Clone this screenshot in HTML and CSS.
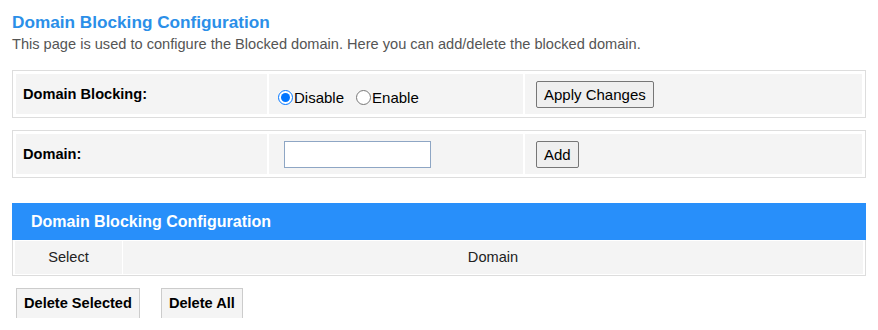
FILE: index.html
```html
<!DOCTYPE html>
<html lang="en">
<head>
    <meta charset="UTF-8">
    <meta name="viewport" content="width=device-width, initial-scale=1.0">
    <title>Domain Blocking Configuration</title>
    <link rel="stylesheet" href="styles.css">
</head>
<body>

<h1 class="page-title">Domain Blocking Configuration</h1>
<p class="page-desc">This page is used to configure the Blocked domain. Here you can add/delete the blocked domain.</p>

<form class="settings-box">
    <div class="cell cell-label">Domain Blocking:</div>
    <div class="cell cell-radios">
        <label class="radio"><input type="radio" name="blocking" checked>Disable</label>
        <label class="radio"><input type="radio" name="blocking">Enable</label>
    </div>
    <div class="cell cell-action">
        <button type="button" class="plain-btn">Apply Changes</button>
    </div>
</form>

<form class="settings-box second">
    <div class="cell cell-label">Domain:</div>
    <div class="cell cell-input">
        <input type="text" class="domain-input">
    </div>
    <div class="cell cell-action">
        <button type="button" class="plain-btn">Add</button>
    </div>
</form>

<div class="list-title">Domain Blocking Configuration</div>
<div class="list-box">
    <div class="list-head">Select</div>
    <div class="list-head">Domain</div>
</div>

<div class="actions">
    <button type="button" class="delete-btn">Delete Selected</button>
    <button type="button" class="delete-btn">Delete All</button>
</div>

</body>
</html>
```

FILE: styles.css
```css
body {
    font-family: 'Liberation Sans', Arial, sans-serif;
    background-color: #fff;
    color: #000;
    margin: 0;
    padding: 12px;
}

.page-title {
    margin: 0;
    font-size: 17.2px;
    line-height: 20px;
    font-weight: bold;
    color: #2b8fe8;
}

.page-desc {
    margin: 4px 0 0;
    font-size: 14.6px;
    line-height: 17px;
    color: #555;
}

.settings-box {
    display: grid;
    grid-template-columns: 251px 254px 1fr;
    gap: 2px;
    margin: 17px 0 0;
    padding: 3px;
    border: 1px solid #ddd;
}

.settings-box.second {
    margin-top: 12px;
}

.cell {
    display: flex;
    align-items: center;
    height: 40px;
    background-color: #f4f4f4;
    font-size: 14.6px;
}

.cell-label {
    padding-left: 7px;
    font-weight: bold;
}

.cell-radios {
    padding-left: 4px;
    padding-top: 6px;
    box-sizing: border-box;
    font-size: 15px;
}

.radio {
    display: flex;
    align-items: center;
    margin-right: 7px;
}

.radio input {
    width: 15px;
    height: 15px;
    margin: 0 1px 0 5px;
}

.cell-input {
    padding-left: 15px;
}

.domain-input {
    width: 147px;
    height: 27px;
    box-sizing: border-box;
    border: 1px solid #8ea6c4;
    border-radius: 0;
    padding: 2px 4px;
    margin: 0;
}

.cell-action {
    padding-left: 11px;
}

.plain-btn {
    font-family: inherit;
    font-size: 15px;
    height: 27px;
    padding: 0 7px;
    background-color: #efefef;
    border: 1px solid #767676;
    border-radius: 2px;
    color: #000;
}

.list-title {
    margin-top: 25px;
    height: 37px;
    display: flex;
    align-items: center;
    padding-left: 19px;
    background-color: #288ffa;
    color: #fff;
    font-size: 16px;
    font-weight: bold;
}

.list-box {
    display: grid;
    grid-template-columns: 107px 1fr;
    gap: 1px;
    padding: 1px 2px 1px 2px;
    border: 1px solid #ddd;
    border-top: none;
}

.list-head {
    height: 33px;
    display: flex;
    align-items: center;
    justify-content: center;
    padding-bottom: 2px;
    box-sizing: border-box;
    background-color: #f4f4f4;
    font-size: 14.6px;
    color: #222;
}

.actions {
    display: flex;
    gap: 21px;
    margin: 12px 0 0 4px;
    height: 30px;
    overflow: hidden;
}

.delete-btn {
    font-family: inherit;
    font-size: 14.6px;
    font-weight: bold;
    height: 42px;
    padding: 0 7px 12px;
    background-color: #f4f4f4;
    border: 1px solid #ccc;
    color: #000;
}
```
